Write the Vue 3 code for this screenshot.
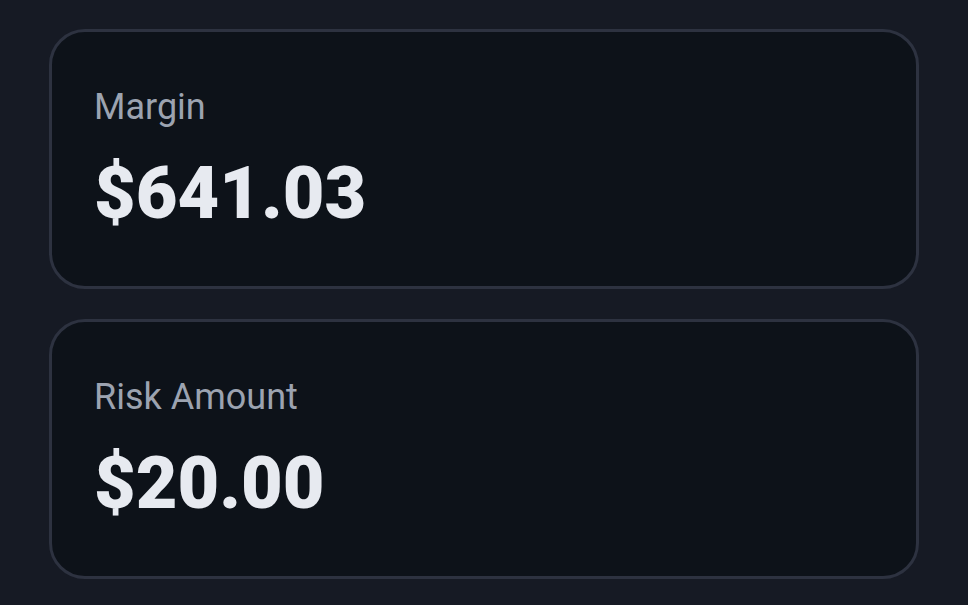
<script setup>
const metrics = [
  { label: 'Margin', value: '$641.03' },
  { label: 'Risk Amount', value: '$20.00' },
]
</script>

<template>
  <main class="panel">
    <dl v-for="metric in metrics" :key="metric.label" class="card">
      <dt class="label">{{ metric.label }}</dt>
      <dd class="value">{{ metric.value }}</dd>
    </dl>
  </main>
</template>

<style>
body {
  margin: 0;
  background: #161a24;
}
</style>

<style scoped>
.panel {
  display: grid;
  gap: 30px;
  padding: 29px 49px 26px;
  font-family: Roboto, sans-serif;
}

.card {
  box-sizing: border-box;
  margin: 0;
  padding: 53px 42px 49px;
  border: 3px solid #2d3240;
  border-radius: 36px;
  background: #0d1219;
}

.label {
  color: #9ca3b0;
  font-size: 36px;
  line-height: 44px;
}

.value {
  margin: 0;
  padding-top: 22px;
  color: #e7eaf0;
  font-size: 72px;
  font-weight: 900;
  line-height: 86px;
}
</style>
